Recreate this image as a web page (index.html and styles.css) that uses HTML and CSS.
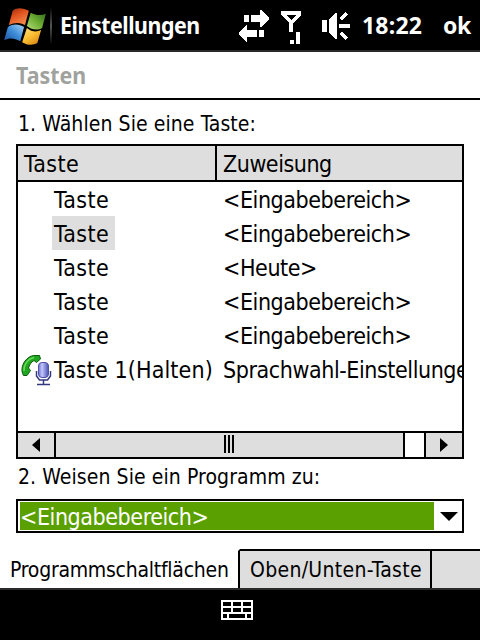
FILE: index.html
```html
<!DOCTYPE html>
<html lang="de">
<head>
<meta charset="utf-8">
<title>Einstellungen</title>
<link rel="stylesheet" href="styles.css">
</head>
<body>
<div class="titlebar">
    <svg class="logo" width="42" height="38" viewBox="0 0 44 40">
        <defs>
            <linearGradient id="red" x1="0" y1="0" x2="0.6" y2="1">
                <stop offset="0" stop-color="#8c2a12"/>
                <stop offset="0.45" stop-color="#e0501c"/>
                <stop offset="1" stop-color="#f58a4a"/>
            </linearGradient>
            <linearGradient id="green" x1="1" y1="0" x2="0" y2="1">
                <stop offset="0" stop-color="#2f6a1c"/>
                <stop offset="0.5" stop-color="#6cae32"/>
                <stop offset="1" stop-color="#b4dc7c"/>
            </linearGradient>
            <linearGradient id="blue" x1="0" y1="1" x2="1" y2="0">
                <stop offset="0" stop-color="#1c4f9c"/>
                <stop offset="0.5" stop-color="#3c8cd8"/>
                <stop offset="1" stop-color="#a8d4f4"/>
            </linearGradient>
            <linearGradient id="yellow" x1="0" y1="0" x2="0.8" y2="1">
                <stop offset="0" stop-color="#ffe48c"/>
                <stop offset="0.5" stop-color="#fcc034"/>
                <stop offset="1" stop-color="#d88414"/>
            </linearGradient>
        </defs>
        <path fill="url(#red)" d="M9 4C14 0 20 1 26 4L22 19C17 16 11 16 5 19Z"/>
        <path fill="url(#green)" d="M28 6C34 9 39 9 44 7L40 22C35 25 29 24 24 20Z"/>
        <path fill="url(#blue)" d="M4 21C10 17 16 18 21 21L17 36C11 33 6 32 0 35Z"/>
        <path fill="url(#yellow)" d="M24 22C29 26 34 27 39 24L35 38C30 41 24 40 19 37Z"/>
    </svg>
    <div class="divider"></div>
    <div class="caption"><span class="narrow">Einstellungen</span></div>
    <svg class="status" width="112" height="36" viewBox="238 8 112 36" fill="#fff" shape-rendering="crispEdges">
        <path d="M244 15h5v7h-5zM251 15h9v-5h2l7 8v1l-7 8h-2v-5h-9zM259 30h5v7h-5zM257 30h-10v-5h-1l-7 8v1l7 8h1v-5h10z"/>
        <path fill-rule="evenodd" d="M281 11h20v4l-8 8v9h-4v-9l-8-8zM286 15l5 5 5-5z"/>
        <path d="M290 40h4v4h-4zM296 32h4v12h-4z"/>
        <path d="M322 20h5v12h-5zM329 20l6-7h2v26h-2l-6-7zM339 24h11v4h-11z"/>
        <path d="M339 18l6-6 3 2-6 6zM339 34l6 6 3-2-6-6z"/>
    </svg>
    <span class="clock">18:22</span>
    <span class="ok">ok</span>
</div>

<div class="heading"><span class="narrow">Tasten</span></div>

<div class="content">
    <div class="label first">1. Wählen Sie eine Taste:</div>
    <div class="list">
        <div class="row header">
            <div class="col1">Taste</div>
            <div class="col2">Zuweisung</div>
        </div>
        <div class="rows">
            <div class="row">
                <div class="icon"></div>
                <div class="key"><span>Taste</span></div>
                <div class="action">&lt;Eingabebereich&gt;</div>
            </div>
            <div class="row">
                <div class="icon"></div>
                <div class="key"><span class="selected">Taste</span></div>
                <div class="action">&lt;Eingabebereich&gt;</div>
            </div>
            <div class="row">
                <div class="icon"></div>
                <div class="key"><span>Taste</span></div>
                <div class="action">&lt;Heute&gt;</div>
            </div>
            <div class="row">
                <div class="icon"></div>
                <div class="key"><span>Taste</span></div>
                <div class="action">&lt;Eingabebereich&gt;</div>
            </div>
            <div class="row">
                <div class="icon"></div>
                <div class="key"><span>Taste</span></div>
                <div class="action">&lt;Eingabebereich&gt;</div>
            </div>
            <div class="row">
                <div class="icon">
                    <svg width="32" height="32" viewBox="0 0 32 32">
                        <defs>
                            <linearGradient id="mic" x1="0" y1="0" x2="1" y2="0">
                                <stop offset="0" stop-color="#6a70d0"/>
                                <stop offset="0.35" stop-color="#c4c8fa"/>
                                <stop offset="1" stop-color="#4a50b4"/>
                            </linearGradient>
                        </defs>
                        <path fill="#1fa81f" stroke="#0c5c0c" d="M13.500 1.500L19.500 1.500L20.500 5L16.500 8.500L14 6.500C11 8 9.500 11 8.500 14L10.500 16.500L7 21.500L3.500 21.500C1 17 1.500 12 5 7C7.500 4 10 2 13.500 1.500Z"/>
                        <path fill="none" stroke="#6cdc5c" stroke-width="1.500" d="M4 17C3.500 12 7 5 14 3.500"/>
                        <rect x="18.500" y="8.500" width="10" height="15" rx="3.500" fill="url(#mic)" stroke="#4c50a8"/>
                        <path fill="none" stroke="#34387c" stroke-width="1.500" d="M16.500 17v5l3 4h8l3-4v-5M23.500 26v4M17 30.500h13"/>
                    </svg>
                </div>
                <div class="key long"><span>Taste 1(Halten)</span></div>
                <div class="action">Sprachwahl-Einstellungen</div>
            </div>
        </div>
        <div class="scrollbar">
            <div class="arrow"><svg width="8" height="14"><path d="M8 0v14L0 7z"/></svg></div>
            <div class="thumb"><i></i><i></i><i></i></div>
            <div class="track"></div>
            <div class="arrow"><svg width="8" height="14"><path d="M0 0v14l8-7z"/></svg></div>
        </div>
    </div>
    <div class="label second">2. Weisen Sie ein Programm zu:</div>
    <div class="combo">
        <div class="value">&lt;Eingabebereich&gt;</div>
        <svg width="18" height="9"><path d="M0 0h18l-9 9z"/></svg>
    </div>
</div>

<div class="tabs">
    <div class="tab active">Programmschaltflächen</div>
    <div class="tab">Oben/Unten-Taste</div>
    <div class="filler"></div>
</div>

<div class="menubar">
    <svg width="32" height="20" viewBox="0 0 32 20" shape-rendering="crispEdges">
        <path fill="#fff" d="M0 0h32v20H0z"/>
        <path d="M2 2h8v4H2zM12 2h8v4h-8zM22 2h8v4h-8zM2 8h8v4H2zM12 8h8v4h-8zM22 8h8v4h-8zM2 14h4v4H2zM8 14h16v4H8zM26 14h4v4h-4z"/>
    </svg>
</div>
</body>
</html>
```
FILE: styles.css
```css
* {
    box-sizing: border-box;
}
body {
    margin: 0;
    width: 480px;
    height: 640px;
    overflow: hidden;
    display: flex;
    flex-direction: column;
    background: #fff;
    color: #000;
    font-family: "DejaVu Sans Condensed", "DejaVu Sans", sans-serif;
    font-stretch: condensed;
    font-size: 23px;
    white-space: nowrap;
}
svg {
    display: block;
    flex: none;
}
.titlebar {
    display: flex;
    height: 52px;
    flex: none;
    background: #000;
    border-bottom: 2px solid #2a2a2a;
    color: #fff;
    font-family: "Noto Sans", sans-serif;
    font-stretch: normal;
    font-weight: bold;
    font-size: 23px;
    line-height: 51px;
}
.narrow {
    display: inline-block;
    transform: scaleX(0.93);
    transform-origin: left;
}
.logo {
    margin: 7px 0 0 4px;
}
.divider {
    width: 2px;
    height: 38px;
    margin: 7px 0 0 4px;
    background: linear-gradient(#000, #555, #000);
}
.caption {
    width: 178px;
    margin-left: 8px;
    letter-spacing: -0.5px;
}
.status {
    margin-top: 8px;
}
.clock {
    width: 81px;
    margin-left: 12px;
    letter-spacing: 0.2px;
}
.ok {
    letter-spacing: -0.5px;
}
.heading {
    height: 48px;
    flex: none;
    padding-left: 16px;
    border-bottom: 2px solid #000;
    color: #a0a29e;
    font-family: "Noto Sans", sans-serif;
    font-stretch: normal;
    font-weight: bold;
    font-size: 23px;
    line-height: 46px;
}
.content {
    height: 449px;
    flex: none;
    padding: 0 16px;
}
.label {
    padding-left: 2px;
    font-size: 21px;
    letter-spacing: 0.08px;
}
.first {
    height: 44px;
    line-height: 48px;
}
.second {
    height: 40px;
    line-height: 37px;
}
.list {
    height: 315px;
    border: 2px solid #000;
    display: flex;
    flex-direction: column;
}
.row {
    display: flex;
    height: 34px;
    line-height: 36px;
}
.header {
    height: 36px;
    background: #dedede;
    border-bottom: 2px solid #000;
}
.col1 {
    width: 199px;
    padding-left: 6px;
    border-right: 2px solid #000;
    letter-spacing: 0.4px;
}
.col2 {
    padding-left: 6px;
    letter-spacing: -0.45px;
}
.rows {
    flex: 1;
    overflow: hidden;
}
.icon {
    width: 34px;
    flex: none;
    padding: 2px 0 0 2px;
}
.key {
    width: 171px;
    flex: none;
    letter-spacing: 0.4px;
}
.key.long {
    letter-spacing: 0.13px;
}
.key span {
    display: inline-block;
    height: 34px;
    padding: 0 6px 0 2px;
}
.key .selected {
    background: #dedede;
}
.action {
    letter-spacing: -0.42px;
}
.scrollbar {
    display: flex;
    height: 26px;
    border-top: 2px solid #000;
    background: #dedede;
}
.arrow {
    display: flex;
    align-items: center;
    width: 36px;
    padding-left: 14px;
}
.thumb {
    display: flex;
    justify-content: center;
    gap: 2px;
    width: 351px;
    padding: 2px 1px 0 0;
    border: solid #000;
    border-width: 0 2px;
}
.thumb i {
    width: 2px;
    height: 18px;
    background: #000;
}
.track {
    width: 21px;
    background: #fff;
    border-right: 2px solid #000;
}
.combo {
    display: flex;
    align-items: center;
    height: 34px;
    padding: 1px 4px 1px 2px;
    border: 2px solid #000;
}
.value {
    width: 414px;
    height: 28px;
    margin-right: 6px;
    background: #5aa000;
    color: #fff;
    line-height: 30px;
    letter-spacing: -0.42px;
}
.tabs {
    display: flex;
    height: 39px;
    flex: none;
    font-size: 21px;
    line-height: 39px;
}
.tab {
    width: 192px;
    padding-left: 10px;
    background: #dedede;
    border-top: 2px solid #000;
    border-right: 2px solid #000;
    letter-spacing: 0.3px;
}
.tab.active {
    width: 240px;
    background: #fff;
    border-top-color: #fff;
    letter-spacing: -0.25px;
}
.filler {
    flex: 1;
    background: #dedede;
    border-top: 2px solid #000;
}
.menubar {
    height: 52px;
    flex: none;
    padding: 10px 0 0 221px;
    background: #000;
    border-top: 2px solid #2a2a2a;
}
```
